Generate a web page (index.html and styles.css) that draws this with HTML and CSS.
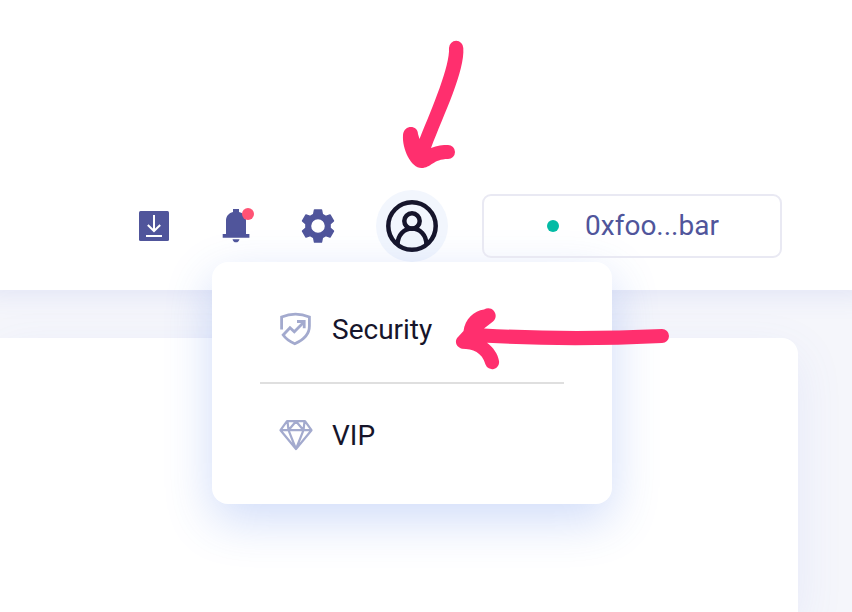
FILE: index.html
```html
<!DOCTYPE html>
<html lang="en">
<head>
<meta charset="utf-8">
<title>Account</title>
<link rel="stylesheet" href="styles.css">
</head>
<body>
<header class="header">
  <div class="tools">
    <svg class="icon-download" width="30" height="30" viewBox="0 0 30 30"><rect width="30" height="30" rx="1.500" fill="#50559b"/><path d="M15 4v16M8.800 14l6.200 6 6.200-6M7 25h16" fill="none" stroke="#fff" stroke-width="2"/></svg>
    <svg class="icon-bell" width="36" height="36" viewBox="0 0 36 36"><path d="M11 1h6v3c4 1 7 4 7 8.500V26h3.400v3.800H.7V26H4V12.500C4 8 7 5 11 4zM10.500 31.200h7c-.5 1.900-1.600 3.100-3.500 3.100s-3-1.200-3.500-3.100z" fill="#50559b"/><circle cx="26" cy="6" r="6" fill="#ff5374"/></svg>
    <svg class="icon-gear" width="34" height="34" viewBox="0 0 34 34"><path fill-rule="evenodd" stroke="#50559b" stroke-width="1.400" stroke-linejoin="round" d="M13.500.9h7l.9 4.500 3.300 1.900 4.300-1.400 3.500 6-3.400 3.100v4l3.400 3.100-3.500 6-4.300-1.400-3.300 1.900-.9 4.500h-7l-.9-4.500-3.300-1.900L5 28.100l-3.500-6 3.400-3.100v-4l-3.400-3.100L5 5.900l4.300 1.400 3.300-1.900zM17 9.500a7.500 7.500 0 1 0 0 15 7.500 7.500 0 0 0 0-15z" fill="#50559b"/></svg>
  </div>
  <div class="account">
    <svg class="avatar" width="72" height="72" viewBox="0 0 72 72"><g fill="none" stroke="#16152b" stroke-width="4.500"><circle cx="36" cy="36" r="23.700"/><circle cx="36" cy="31" r="7.700"/><path d="M21.600 54.500C21.600 45 28 38.500 36 38.500S50.400 45 50.400 54.500"/></g></svg>
    <nav class="menu">
      <a class="item"><svg class="item-icon" width="34" height="34" viewBox="0 0 34 34"><path d="M2.600 17.500V5C12 1 21 1 30.400 5V14c0 8-6 14-14.600 17.700C11 29.700 7 27 4.200 23L11 15.800l4.300 4L24 11" fill="none" stroke="#a3aace" stroke-width="2.800"/><path d="M18 9.500h7.200v6.800" fill="none" stroke="#a3aace" stroke-width="2.800"/></svg><span>Security</span></a>
      <a class="item"><svg class="item-icon" width="34" height="34" viewBox="0 0 34 34"><path d="M8 3.200h18l6.500 9L17 31 1.500 12.200zM1.500 12.200h31M17 3.200l-7.500 9L17 31l7.500-18.800zM8.500 3.500l1 8.700M25.500 3.500l-1 8.700" fill="none" stroke="#a3aace" stroke-width="2.200" stroke-linejoin="round"/></svg><span>VIP</span></a>
    </nav>
  </div>
  <button class="wallet"><i class="dot"></i><span>0xfoo...bar</span></button>
</header>
<main class="content"><section class="panel"></section></main>
<svg class="marks" width="852" height="612" viewBox="0 0 852 612"><g fill="#ff2f6e"><path d="M449 48A7 7 0 0 1 463.300 48C465 71 444 114 431 148C437 145.500 443 145 448 145A7 7 0 0 1 448 159C433 159 431 168 421.500 168C411 168 402 149 403 135C404 124 418 125 418 134L419.500 139C433 106 450 66 449 48z"/><path d="M484 309.500C492 304.500 500 315 493 321.500L484 328.500Q570 333 662 329A7 7 0 0 1 662 343Q570 347.500 487 342.700C493 347 498 354 499 361A7 7 0 0 1 485.500 364.500C482 352 473 349 462 348.700C456 347 454 341 458 337L463.500 331C465 319 474 311 484 309.500z"/></g></svg>
</body>
</html>
```

FILE: styles.css
```css
* { box-sizing: border-box; }
body {
  margin: 0;
  height: 612px;
  overflow: hidden;
  display: flex;
  flex-direction: column;
  background: #f5f6fb;
  font-family: Roboto, "Liberation Sans", sans-serif;
  font-size: 28px;
  color: #16152b;
}
svg { display: block; flex: none; }
.header {
  position: relative;
  z-index: 1;
  height: 290px;
  flex: none;
  padding: 190px 70px 28px 139px;
  display: flex;
  align-items: center;
  background: #fff;
  box-shadow: 0 -18px 28px 20px rgba(80, 92, 200, .13);
}
.tools { display: flex; align-items: center; width: 237px; }
.icon-bell { margin-left: 53px; }
.icon-gear { margin-left: 43px; }
.account { position: relative; width: 72px; height: 72px; }
.avatar { position: relative; border-radius: 50%; background: #f2f6fd; }
.menu {
  position: absolute;
  top: 72px;
  left: -164px;
  width: 400px;
  height: 242px;
  padding: 16px 48px;
  border-radius: 16px;
  background: #fff;
  box-shadow: 0 16px 48px rgba(60, 110, 230, .24);
}
.item {
  height: 106px;
  padding: 0 19px 4px;
  display: flex;
  align-items: center;
  gap: 19px;
}
.item:first-child { padding-bottom: 2px; border-bottom: 2px solid #dfdfdf; }
.wallet {
  position: relative;
  margin-left: 34px;
  width: 300px;
  height: 64px;
  padding: 0 0 0 2px;
  display: flex;
  align-items: center;
  justify-content: center;
  gap: 26px;
  border: 2px solid #e9e9f3;
  border-radius: 9px;
  background: transparent;
  color: #50559b;
  font: inherit;
}
.wallet span { padding-bottom: 2px; }
.dot { width: 12px; height: 12px; border-radius: 50%; background: #03bba5; }
.content { flex: 1; padding-top: 48px; display: flex; min-height: 0; }
.panel {
  width: 798px;
  border-radius: 0 16px 0 0;
  background: #fff;
  box-shadow: 0 16px 48px rgba(100, 115, 230, .1);
}
.marks { position: absolute; inset: 0; z-index: 2; pointer-events: none; }
```
